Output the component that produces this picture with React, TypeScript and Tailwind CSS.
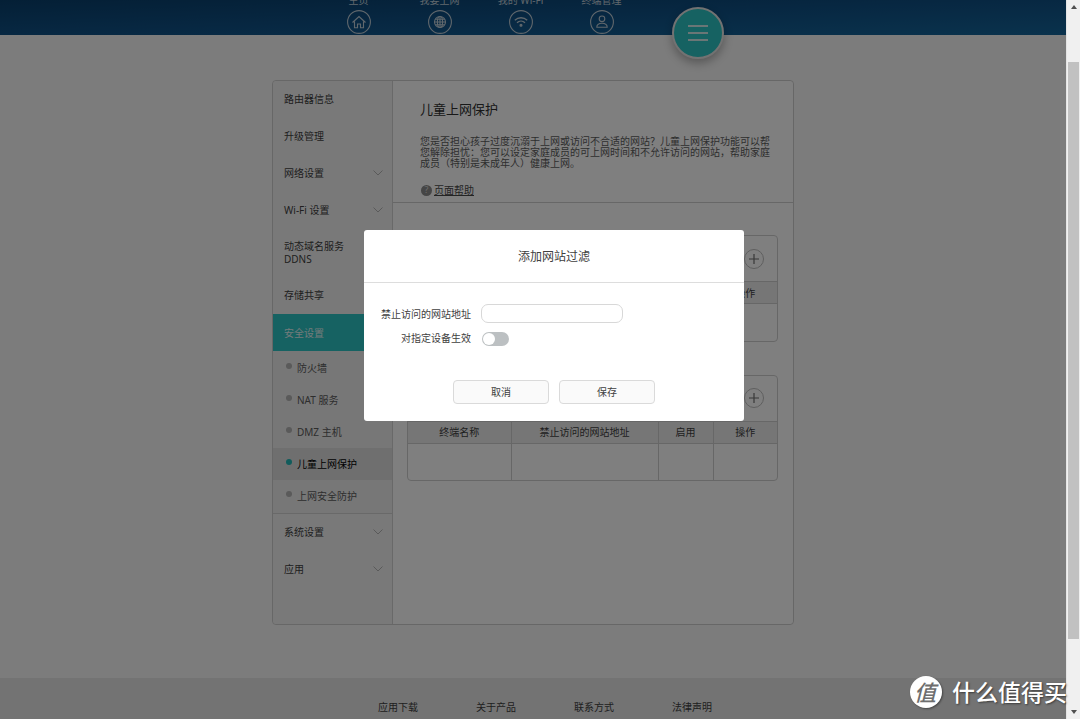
import { useState } from 'react';

type MenuItem = { label: string; sub?: string; expandable?: boolean };

const topMenu: MenuItem[] = [
  { label: '路由器信息' },
  { label: '升级管理' },
  { label: '网络设置', expandable: true },
  { label: 'Wi-Fi 设置', expandable: true },
  { label: '动态域名服务', sub: 'DDNS' },
  { label: '存储共享' },
];

const bottomMenu: MenuItem[] = [
  { label: '系统设置', expandable: true },
  { label: '应用', expandable: true },
];

const securityMenu = ['防火墙', 'NAT 服务', 'DMZ 主机', '儿童上网保护', '上网安全防护'];
const footerLinks = ['应用下载', '关于产品', '联系方式', '法律声明'];

const navItems = [
  {
    label: '主页',
    icon: <path d="M5.5 12.5 12 6.5l6.5 6M7.5 11.5v6.300h3v-3.800h3v3.800h3v-6.300" />,
  },
  {
    label: '我要上网',
    icon: (
      <>
        <circle cx="12" cy="12" r="5.500" />
        <ellipse cx="12" cy="12" rx="2.600" ry="5.500" />
        <path d="M12 6.500v11M6.500 12h11M7.300 9.200h9.400M7.300 14.800h9.400" />
      </>
    ),
  },
  {
    label: '我的 Wi-Fi',
    icon: (
      <>
        <path d="M5.800 10.200c3.500-3.300 8.900-3.300 12.400 0M8 12.800c2.300-2.200 5.700-2.200 8 0" strokeWidth="1.300" />
        <circle cx="12" cy="15.300" r="1" fill="currentColor" />
      </>
    ),
  },
  {
    label: '终端管理',
    icon: (
      <>
        <circle cx="12" cy="8.800" r="2.800" />
        <path d="M6.800 17.300c0-5.400 10.400-5.400 10.400 0Z" />
      </>
    ),
  },
];

function TopBar() {
  return (
    <header className="h-[35px] bg-linear-to-br from-[#093f6c] via-[#0f5085] to-[#14659a]">
      <div className="relative mx-auto flex h-full w-[522px] items-end pl-[46px]">
        {navItems.map((item) => (
          <a key={item.label} href="#" className="flex w-[81px] flex-col items-center text-[10px] leading-3 text-[#c0ced8]">
            <span className="mb-1 whitespace-nowrap">{item.label}</span>
            <svg viewBox="0 0 24 24" className="mb-px size-6" fill="none" stroke="currentColor" strokeWidth="1.1">
              <circle cx="12" cy="12" r="11.4" />
              {item.icon}
            </svg>
          </a>
        ))}
        <button
          aria-label="更多功能"
          className="absolute top-[7px] right-[70px] flex size-[52px] flex-col items-center justify-center gap-[5px] rounded-full border-2 border-[#e4e4e4] bg-[#2cc4c4] shadow-[0_4px_10px_rgba(0,0,0,0.3)]"
        >
          <span className="h-0.5 w-5 bg-[#d4ecec]" />
          <span className="h-0.5 w-5 bg-[#d4ecec]" />
          <span className="h-0.5 w-5 bg-[#d4ecec]" />
        </button>
      </div>
    </header>
  );
}

function MenuRow({ item }: { item: MenuItem }) {
  return (
    <a href="#" className={`flex items-center justify-between pr-[9px] pl-[11px] ${item.sub ? 'h-12' : 'h-[37px]'}`}>
      <span className="leading-[13px]">
        {item.label}
        {item.sub && <span className="block">{item.sub}</span>}
      </span>
      {item.expandable && (
        <svg viewBox="0 0 10 6" className="mb-0.5 h-1.5 w-2.5" fill="none" stroke="#b4b4b4" strokeWidth="1">
          <path d="m.5.5 4.500 4.500L9.500.5" />
        </svg>
      )}
    </a>
  );
}

function SideMenu() {
  const [active, setActive] = useState('儿童上网保护');

  return (
    <nav className="w-[120px] shrink-0 rounded-l border-r border-[#d2d2d2] bg-[#f3f3f3] text-[#404040]">
      {topMenu.map((item) => (
        <MenuRow key={item.label} item={item} />
      ))}
      <a href="#" className="flex h-[37px] items-center bg-[#2cc4c4] pl-[11px] text-[#e6f6f6]">
        安全设置
      </a>
      <ul className="border-b border-[#d2d2d2] bg-[#eeeeee] py-px">
        {securityMenu.map((label) => (
          <li key={label}>
            <button
              onClick={() => setActive(label)}
              className={`flex h-8 w-full items-center gap-[5px] pl-[13px] ${
                active === label ? 'bg-[#dfdfdf] text-black' : 'text-[#5c5c5c]'
              }`}
            >
              <span className={`mb-1 size-1.5 rounded-full ${active === label ? 'bg-[#22b8b8]' : 'bg-[#b4b4b4]'}`} />
              {label}
            </button>
          </li>
        ))}
      </ul>
      {bottomMenu.map((item) => (
        <MenuRow key={item.label} item={item} />
      ))}
    </nav>
  );
}

function RuleTable({ columns, addLabel }: { columns: string[]; addLabel: string }) {
  return (
    <section className="rounded border border-[#cfcfcf]">
      <div className="flex h-[45px] items-center justify-end pr-[13px]">
        <button aria-label={addLabel} className="flex size-5 items-center justify-center rounded-full border border-[#bdbdbd]">
          <svg viewBox="0 0 12 12" className="size-3 shrink-0" stroke="#707070" strokeWidth="1.200">
            <path d="M6 1v10M1 6h10" />
          </svg>
        </button>
      </div>
      <table className="w-full table-fixed text-[#404040]">
        <colgroup>
          <col className="w-[103px]" />
          <col />
          <col className="w-[55px]" />
          <col className="w-16" />
        </colgroup>
        <thead>
          <tr className="h-[22px] border-y border-[#cfcfcf] bg-[#ececec]">
            {columns.map((column) => (
              <th key={column} className="border-r border-[#cfcfcf] font-normal last:border-r-0">
                {column}
              </th>
            ))}
          </tr>
        </thead>
        <tbody>
          <tr className="h-[37px]">
            {columns.map((column) => (
              <td key={column} className="border-r border-[#cfcfcf] last:border-r-0" />
            ))}
          </tr>
        </tbody>
      </table>
    </section>
  );
}

function ParentalControl() {
  return (
    <main className="min-w-0 flex-1 rounded-r bg-white">
      <div className="border-b border-[#cfcfcf] px-[27px] pt-[18px] pb-[5px]">
        <h1 className="text-[13px] leading-5 text-[#303030]">儿童上网保护</h1>
        <p className="mt-[17px] w-[350px] leading-[11px] text-[#5c5c5c]">
          您是否担心孩子过度沉溺于上网或访问不合适的网站？儿童上网保护功能可以帮您解除担忧：您可以设定家庭成员的可上网时间和不允许访问的网站，帮助家庭成员（特别是未成年人）健康上网。
        </p>
        <a href="#" className="mt-3.5 flex items-center gap-0.5 pl-px leading-[14px] text-[#484848]">
          <span className="flex size-[11px] items-center justify-center rounded-full bg-[#8c8c8c] text-[9px] text-[#d8d8d8]">?</span>
          <span className="underline underline-offset-1">页面帮助</span>
        </a>
      </div>
      <div className="flex flex-col gap-[33px] pt-8 pr-[15px] pl-[14px]">
        <RuleTable columns={['终端名称', '允许上网时间', '启用', '操作']} addLabel="添加上网时间" />
        <RuleTable columns={['终端名称', '禁止访问的网站地址', '启用', '操作']} addLabel="添加网站过滤" />
      </div>
    </main>
  );
}

function FilterDialog() {
  const [url, setUrl] = useState('');
  const [limited, setLimited] = useState(false);

  return (
    <div className="absolute inset-0 flex items-start justify-center bg-black/50 pt-[230px] pl-[42px]">
      <form
        role="dialog"
        aria-labelledby="filter-title"
        onSubmit={(e) => e.preventDefault()}
        className="w-[380px] rounded-[3px] bg-white text-[#404040]"
      >
        <h2 id="filter-title" className="border-b border-[#dddddd] pt-0.5 text-center text-[12px] leading-[50px]">
          添加网站过滤
        </h2>
        <div className="grid grid-cols-[107px_1fr] items-center gap-x-[10px] gap-y-1.5 pt-[21px]">
          <label htmlFor="filter-url" className="text-right">禁止访问的网站地址</label>
          <input
            id="filter-url"
            type="text"
            value={url}
            onChange={(e) => setUrl(e.target.value)}
            className="h-[19px] w-[142px] rounded-[7px] border border-[#d8d8d8] px-2 outline-none"
          />
          <label htmlFor="filter-device" className="text-right leading-[19px]">对指定设备生效</label>
          <input
            id="filter-device"
            type="checkbox"
            checked={limited}
            onChange={(e) => setLimited(e.target.checked)}
            className="ml-px flex h-3.5 w-[27px] appearance-none items-center rounded-full bg-[#bcc0c2] px-px before:size-3 before:rounded-full before:bg-white checked:justify-end checked:bg-[#2cc4c4]"
          />
        </div>
        <div className="flex justify-center gap-[10px] pt-8 pb-[17px]">
          <button type="button" className="h-6 w-24 rounded border border-[#dadada] bg-[#fafafa]">取消</button>
          <button type="submit" className="h-6 w-24 rounded border border-[#dadada] bg-[#fafafa]">保存</button>
        </div>
      </form>
    </div>
  );
}

function ScrollBar() {
  return (
    <div className="flex w-3.5 shrink-0 flex-col items-center border-l border-[#e4e4e4] bg-[#f0f0f0] py-[5px]">
      <svg viewBox="0 0 6 4" className="h-1 w-1.5" fill="#505050">
        <path d="M3 0 6 4H0Z" />
      </svg>
      <div className="mt-[53px] mb-[71px] w-[11px] flex-1 bg-[#c1c1c1]" />
      <svg viewBox="0 0 6 4" className="h-1 w-1.5" fill="#505050">
        <path d="M0 0h6L3 4Z" />
      </svg>
    </div>
  );
}

function Watermark() {
  return (
    <div className="absolute right-[13px] bottom-[11px] flex items-center gap-[10px] font-medium text-white">
      <span className="flex size-8 items-center justify-center rounded-full bg-white pr-0.5 text-[22px] leading-8 text-[#6e6e6e] italic shadow-[1px_1px_2px_rgba(0,0,0,0.4)]">
        值
      </span>
      <span className="text-[23px] leading-8 text-shadow-[1px_1px_2px_rgba(0,0,0,0.5)]">什么值得买</span>
    </div>
  );
}

export default function App() {
  return (
    <div
      lang="zh-CN"
      className="relative flex min-h-screen overflow-hidden font-['Noto_Sans','Noto_Sans_CJK_SC',sans-serif] text-[10px] leading-[14px]"
    >
      <div className="relative flex min-w-0 flex-1 flex-col bg-[#f8f8f8]">
        <TopBar />
        <div className="mx-auto mt-[45px] mb-[53px] flex min-h-[545px] w-[522px] rounded border border-[#cfcfcf]">
          <SideMenu />
          <ParentalControl />
        </div>
        <footer className="flex flex-1 justify-center bg-[#e6e6e6] pt-[22px] pl-6 text-[#404040]">
          {footerLinks.map((link) => (
            <a key={link} href="#" className="w-[98px] text-center">{link}</a>
          ))}
        </footer>
        <FilterDialog />
      </div>
      <ScrollBar />
      <Watermark />
    </div>
  );
}
